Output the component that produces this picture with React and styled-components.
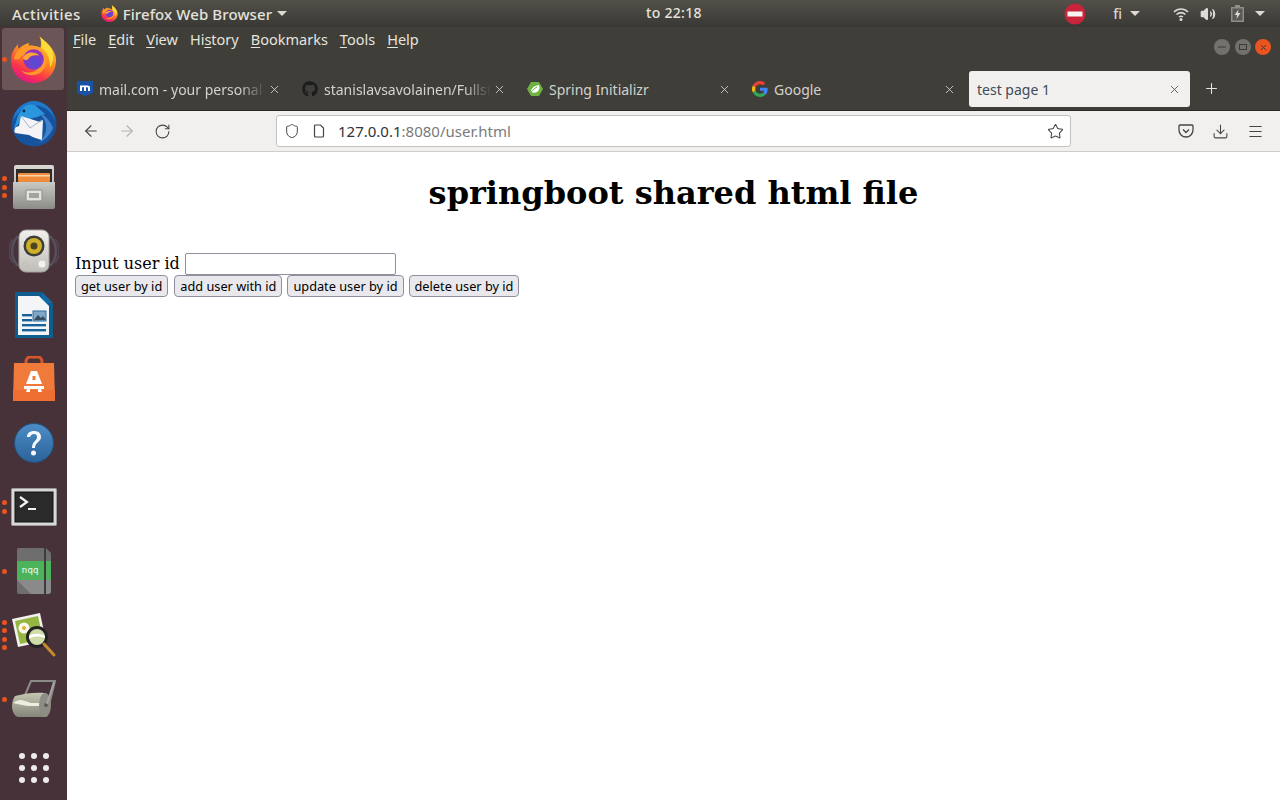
import React from 'react';
import styled, { createGlobalStyle } from 'styled-components';
import { FaGithub } from 'react-icons/fa';
import { ArrowLeft, ArrowRight, RotateCw, Star, Download, Menu, Plus, X, Shield, Volume2 } from 'lucide-react';

const UI_FONT = '"Noto Sans", "Open Sans", sans-serif';

const Global = createGlobalStyle`
  html, body { margin: 0; padding: 0; height: 100%; overflow: hidden; background: #fff; }
  #root { height: 100%; }
`;

const Screen = styled.div`
  width: 1280px;
  height: 800px;
  display: flex;
  flex-direction: column;
  font-family: ${UI_FONT};
`;

const TopBar = styled.header`
  position: relative;
  height: 27px;
  flex-shrink: 0;
  display: flex;
  align-items: center;
  padding: 0 15px 0 12px;
  color: #e4e2dc;
  font-size: 15px;
  font-weight: 500;
  background: linear-gradient(#53504a, #393834);
`;

const Activities = styled.span`
  letter-spacing: 0.4px;
`;

const AppName = styled.div`
  display: flex;
  align-items: center;
  margin-left: 20px;
  gap: 5px;
  letter-spacing: 0.1px;
`;

const Caret = styled.span`
  width: 0;
  height: 0;
  margin-left: ${p => p.$left || 0}px;
  border-left: 5px solid transparent;
  border-right: 5px solid transparent;
  border-top: 5px solid #dcdad4;
`;

const Clock = styled.div`
  position: absolute;
  left: 646px;
  top: 3px;
  font-size: 14px;
  letter-spacing: 0.3px;
`;

const Tray = styled.div`
  margin-left: auto;
  display: flex;
  align-items: center;
`;

const TrayIcon = styled.span`
  display: flex;
  margin-left: ${p => p.$left}px;
`;

const Lang = styled.span`
  margin-left: 27px;
  font-size: 14px;
  color: #d7d7d7;
`;

const Main = styled.div`
  flex: 1;
  display: flex;
  min-height: 0;
`;

const Dock = styled.nav`
  width: 67px;
  flex-shrink: 0;
  display: flex;
  flex-direction: column;
  background: #48323a;
`;

const DockItem = styled.div`
  position: relative;
  height: 64px;
  display: flex;
  align-items: center;
  justify-content: center;
  flex-shrink: 0;

  &.active::before {
    content: '';
    position: absolute;
    left: 2px;
    top: 1px;
    width: 62px;
    height: 62px;
    border-radius: 3px;
    background: #6b5557;
  }
  svg { position: relative; }
`;

const Dots = styled.div`
  position: absolute;
  left: 2px;
  top: 0;
  bottom: 0;
  display: flex;
  flex-direction: column;
  justify-content: center;
  gap: 3.5px;
`;

const Dot = styled.i`
  display: block;
  width: 5px;
  height: 5px;
  border-radius: 50%;
  background: #e9541f;
`;

const AppGrid = styled.div`
  margin: 0 auto;
  display: grid;
  grid-template-columns: repeat(3, 6px);
  gap: 6px;
  padding-top: 22px;

  i {
    width: 6px;
    height: 6px;
    border-radius: 50%;
    background: #eeecea;
  }
`;

const Browser = styled.section`
  flex: 1;
  min-width: 0;
  display: flex;
  flex-direction: column;
`;

const Chrome = styled.div`
  background: #3f3e39;
  border-bottom: 1px solid #2a2926;
  color: #e6e4df;
`;

const MenuRow = styled.div`
  height: 41px;
  box-sizing: border-box;
  display: flex;
  gap: 12px;
  padding: 3px 0 0 6px;
  font-size: 14.5px;

  u { text-underline-offset: 2px; }
`;

const MenuItem = styled.span`
  height: 20px;
  line-height: 19px;
`;

const WinButtons = styled.div`
  margin-left: auto;
  margin-right: 9px;
  display: flex;
  gap: 4.5px;
  padding-top: 9px;
`;

const WinButton = styled.span`
  width: 16px;
  height: 16px;
  border-radius: 50%;
  display: flex;
  align-items: center;
  justify-content: center;
  background: ${p => (p.$close ? '#e95420' : '#72716c')};
  color: #3b3a36;
`;

const TabRow = styled.div`
  height: 42px;
  box-sizing: border-box;
  display: flex;
  align-items: flex-start;
  gap: 4px;
  padding: 3px 0 0 2px;
`;

const Tab = styled.div`
  width: 221px;
  height: 36px;
  display: flex;
  align-items: center;
  padding: 0 8px;
  box-sizing: border-box;
  border-radius: 3px;
  font-size: 14px;
  background: ${p => (p.$active ? '#f2f0ef' : 'transparent')};
  color: ${p => (p.$active ? '#3f4b57' : '#d4d2cd')};
`;

const TabIcon = styled.span`
  width: 16px;
  height: 16px;
  flex-shrink: 0;
  margin-right: 6px;
  display: flex;
`;

const TabLabel = styled.span`
  flex: 1;
  min-width: 0;
  overflow: hidden;
  white-space: nowrap;
  ${p => p.$fade && 'mask-image: linear-gradient(to right, #000 84%, transparent 100%);'}
`;

const TabClose = styled.span`
  display: flex;
  width: 16px;
  justify-content: center;
  flex-shrink: 0;
  color: ${p => (p.$active ? '#4a4a4a' : '#dedcd7')};
`;

const NewTab = styled.span`
  display: flex;
  margin: 9px 0 0 9px;
  color: #e6e4df;
`;

const NavBar = styled.div`
  height: 41px;
  box-sizing: border-box;
  display: flex;
  align-items: center;
  background: #f2f0ef;
  border-bottom: 1px solid #cfcdca;
  color: #454545;
`;

const NavButtons = styled.div`
  width: 209px;
  flex-shrink: 0;
  display: flex;
  align-items: center;
  gap: 18px;
  padding-left: 15px;
  box-sizing: border-box;
`;

const UrlBox = styled.div`
  width: 795px;
  height: 32px;
  box-sizing: border-box;
  display: flex;
  align-items: center;
  gap: 13px;
  padding: 0 6px 0 7px;
  background: #fff;
  border: 1px solid #c4c2be;
  border-radius: 3px;
  font-size: 15px;
`;

const UrlText = styled.span`
  flex: 1;
  color: #7a7a7a;
  b { font-weight: 400; color: #333; }
`;

const NavRight = styled.div`
  margin-left: auto;
  display: flex;
  align-items: center;
  gap: 18px;
  padding-right: 16px;
`;

const Page = styled.main`
  flex: 1;
  padding: 0 8px;
  background: #fff;
  color: #000;
  font-family: "DejaVu Serif", serif;
  font-size: 16px;
`;

const Title = styled.h1`
  margin: 22.44px 0 0;
  font-size: 32px;
  text-align: center;
`;

const Line = styled.div`
  display: flex;
  align-items: center;
  height: 22px;
`;

const FirstLine = styled(Line)`
  margin-top: 41px;
  gap: 5px;

  span { margin-top: -2px; }
`;

const TextInput = styled.input`
  width: 211px;
  height: 22px;
  box-sizing: border-box;
  padding: 0 4px;
  background: #fff;
  border: 1px solid #8f8f9d;
  border-radius: 2px;
`;

const ActionButton = styled.button`
  height: 22px;
  box-sizing: border-box;
  padding: 0 5px;
  margin-right: 6px;
  font-family: ${UI_FONT};
  font-size: 12.75px;
  color: #000;
  background: #e9e9ed;
  border: 1px solid #8f8f9d;
  border-radius: 4px;

  &:nth-child(n + 2) { margin-right: 5px; }
`;

const FirefoxLogo = ({ size }) => (
  <svg width={size} height={size} viewBox="0 0 48 48">
    <defs>
      <linearGradient id="ffBody" x1="0.75" y1="0.1" x2="0.3" y2="1">
        <stop offset="0" stopColor="#ffd02e" />
        <stop offset="0.4" stopColor="#ff8a1e" />
        <stop offset="0.75" stopColor="#f9344c" />
        <stop offset="1" stopColor="#e31587" />
      </linearGradient>
      <radialGradient id="ffGlobe" cx="0.55" cy="0.65" r="0.7">
        <stop offset="0" stopColor="#4f4fd6" />
        <stop offset="1" stopColor="#a32bb8" />
      </radialGradient>
    </defs>
    <path d="M30 0c3 4 9 7 12 12 4 5 5 9 5 13 0 13-10 23-23 23S1 38 1 25c0-5 1-8 3-11 1-2 3-4 4-6 0 2 0 4 1 5 3-3 7-5 11-6-1 1-1 2-1 3 4-1 8 0 12 2 1-3 1-8-1-12z" fill="url(#ffBody)" />
    <path d="M31 1c4 4 10 8 12 14 2 6 1 12-2 17 0-8-2-15-9-20 1-3 1-7-1-11z" fill="#ffdb3a" />
    <path d="M4 24c1-8 8-14 17-14 8 0 14 5 16 13 1 6-2 12-7 15-6 3-14 3-19-3 4 3 10 3 14 1 5-2 7-7 5-12-2-4-6-6-10-6-5 0-9 2-11 6z" fill="#ff9a2a" />
    <circle cx="24" cy="24" r="10.5" fill="url(#ffGlobe)" />
    <path d="M13 23c1-4 6-7 11-6 2 0 5 1 6 3-5-1-9 0-11 3-1 2-4 2-6 0z" fill="#ffa436" />
  </svg>
);

const Thunderbird = () => (
  <svg width="48" height="48" viewBox="0 0 48 48">
    <circle cx="24" cy="25" r="22.5" fill="#17539d" />
    <path d="M3 22C4 10 14 2 24 2c10 0 20 8 21 20-2-7-7-12-13-14-5-2-11-2-16 1-6 3-10 7-13 13z" fill="#1f78c8" />
    <path d="M4 30l4-14 6-8c4-3 9-3 12-1l9 8-8 3-16 4-7 8z" fill="#2a97dc" />
    <path d="M30 14c6 3 11 9 13 15-3 7-8 12-14 15 6-6 9-14 6-22z" fill="#3f83cc" />
    <path d="M11 17l19 6 3-2-1 20c-3-1-8-2-13-5l-14-2c-1-2-1-4 1-6l3-1z" fill="#f4f4f6" />
    <path d="M11 17l9 12 12-8" fill="none" stroke="#a9b4c6" strokeWidth="1" />
    <circle cx="14" cy="12" r="1.4" fill="#102a4a" />
  </svg>
);

const FileCabinet = () => (
  <svg width="48" height="48" viewBox="0 0 48 48">
    <defs>
      <linearGradient id="cabBody" x1="0" y1="0" x2="0" y2="1">
        <stop offset="0" stopColor="#c9c9c6" />
        <stop offset="1" stopColor="#8b8b88" />
      </linearGradient>
      <linearGradient id="cabTop" x1="0" y1="0" x2="0" y2="1">
        <stop offset="0" stopColor="#d8d8d5" />
        <stop offset="1" stopColor="#9d9d9a" />
      </linearGradient>
    </defs>
    <rect x="4" y="2" width="40" height="43" rx="2" fill="url(#cabTop)" />
    <rect x="6" y="6" width="36" height="13" fill="#2d2a27" />
    <rect x="8" y="10" width="32" height="9" rx="1" fill="#ef8b3d" />
    <rect x="8" y="12" width="32" height="1.500" fill="#f9d6a8" />
    <path d="M3 19h42v25a2 2 0 0 1-2 2H5a2 2 0 0 1-2-2z" fill="url(#cabBody)" />
    <rect x="16" y="27" width="16" height="11" rx="1" fill="#e2e2df" stroke="#8a8a87" />
    <rect x="19" y="30" width="10" height="5" fill="#a3a3a0" />
  </svg>
);

const Speaker = () => (
  <svg width="50" height="50" viewBox="0 0 50 50">
    <defs>
      <linearGradient id="spkBody" x1="0" y1="0" x2="0" y2="1">
        <stop offset="0" stopColor="#f1f0ec" />
        <stop offset="1" stopColor="#bdbcb6" />
      </linearGradient>
    </defs>
    <path d="M9 10a22 22 0 0 0 0 30M41 10a22 22 0 0 1 0 30" fill="none" stroke="#6c7d92" strokeWidth="2.5" opacity="0.4" />
    <path d="M4 13a20 20 0 0 0 0 24M46 13a20 20 0 0 1 0 24" fill="none" stroke="#6c7d92" strokeWidth="2" opacity="0.25" />
    <rect x="10" y="4" width="30" height="42" rx="7" fill="url(#spkBody)" stroke="#a3a29d" />
    <circle cx="25" cy="20" r="10.5" fill="#3d3d3a" />
    <circle cx="25" cy="20" r="8" fill="#cfae2a" />
    <circle cx="25" cy="20" r="3.5" fill="#4d4520" />
    <circle cx="33" cy="38" r="4" fill="#f3f3f0" stroke="#cfcec8" />
    <circle cx="17" cy="38" r="2.5" fill="none" stroke="#c1c0ba" />
  </svg>
);

const WriterDoc = () => (
  <svg width="42" height="48" viewBox="0 0 42 48">
    <path d="M2 1h26l12 12v34H2z" fill="#0f5c8e" />
    <path d="M29 1l11 11H29z" fill="#0f6aa5" />
    <path d="M5 5h21l10 10v29H5z" fill="#f3f5f7" />
    <rect x="9" y="23" width="10" height="2.4" fill="#15639b" />
    <rect x="9" y="28" width="10" height="2.4" fill="#15639b" />
    <rect x="9" y="33" width="24" height="2.4" fill="#15639b" />
    <rect x="9" y="38" width="24" height="2.4" fill="#15639b" />
    <rect x="20" y="20" width="13" height="10" fill="#7ea7c8" stroke="#2f6f9e" />
    <path d="M21 29l4-5 3 3 2-2 3 4z" fill="#374d5e" />
  </svg>
);

const StoreBag = () => (
  <svg width="44" height="46" viewBox="0 0 44 46">
    <path d="M14 10V6c0-3 2-5 4-5h8c2 0 4 2 4 5v4" fill="none" stroke="#d9562a" strokeWidth="3" />
    <path d="M2 7h40l1 38H1z" fill="#f07a3a" />
    <path d="M1 34h42v11H1z" fill="#ee6f31" />
    <path d="M19 15h6l5 13h-16z" fill="#fff" />
    <rect x="20.500" y="20" width="3" height="4" fill="#f07a3a" />
    <rect x="12" y="28" width="20" height="2" fill="#f07a3a" />
    <path d="M12 30h20v3h-20zM15 33h3v3h-4zM26 33h3l1 3h-4z" fill="#fff" />
  </svg>
);

const HelpBall = () => (
  <svg width="40" height="40" viewBox="0 0 40 40">
    <defs>
      <linearGradient id="helpBg" x1="0" y1="0" x2="0" y2="1">
        <stop offset="0" stopColor="#4d8dc6" />
        <stop offset="1" stopColor="#2a6399" />
      </linearGradient>
    </defs>
    <circle cx="20" cy="20" r="19.5" fill="url(#helpBg)" stroke="#22527f" />
    <path d="M13 14c0-4 3-6 7-6s7 2 7 6c0 5-6 5-6 11h-3c0-7 5-7 5-11 0-2-1-3-3-3s-3 1-4 3z" fill="#f5f7fa" />
    <circle cx="19.5" cy="30" r="2.5" fill="#f5f7fa" />
  </svg>
);

const Terminal = () => (
  <svg width="46" height="38" viewBox="0 0 46 38">
    <rect x="0.5" y="0.5" width="45" height="37" rx="1" fill="#d8d8d6" stroke="#9b9b99" />
    <rect x="4" y="4" width="38" height="30" fill="#2a2a2a" stroke="#111" />
    <path d="M9 9l7 5-7 5" fill="none" stroke="#f2f2f2" strokeWidth="2.2" />
    <rect x="17" y="20" width="8" height="2" fill="#f2f2f2" />
  </svg>
);

const Notebook = () => (
  <svg width="34" height="46" viewBox="0 0 34 46">
    <path d="M0 2a2 2 0 0 1 2-2h27l5 5v38a3 3 0 0 1-3 3H2a2 2 0 0 1-2-2z" fill="#6e6e6e" />
    <path d="M0 32h34v11a3 3 0 0 1-3 3H14z" fill="#8a8a8a" />
    <rect x="0" y="13" width="34" height="19" fill="#4cb35a" />
    <text x="13" y="25" fontFamily="DejaVu Sans Mono, monospace" fontSize="9.5" fill="#f2f9f2" textAnchor="middle">nqq</text>
    <rect x="27" y="0" width="2" height="46" fill="#3c3c3c" />
  </svg>
);

const ImageViewer = () => (
  <svg width="46" height="46" viewBox="0 0 46 46">
    <path d="M1 7l28-6 6 28-28 6z" fill="#f1f1ee" />
    <path d="M4 9l23-5 5 23-23 5z" fill="#95b642" />
    <circle cx="13" cy="16" r="5.5" fill="#f9f8f0" />
    <circle cx="13" cy="16" r="2" fill="#e3b12a" />
    <circle cx="26" cy="25" r="9.5" fill="#cfdca8" stroke="#232323" strokeWidth="3" />
    <path d="M18 24c3-3 11-3 16 0v2c-5-2-12-2-16 1z" fill="#fff" />
    <path d="M33 32l10 11" stroke="#c58a2a" strokeWidth="3" strokeLinecap="round" />
  </svg>
);

const Roller = () => (
  <svg width="46" height="40" viewBox="0 0 46 40">
    <defs>
      <linearGradient id="rollBody" x1="0" y1="0" x2="0" y2="1">
        <stop offset="0" stopColor="#c5c6b2" />
        <stop offset="1" stopColor="#85867a" />
      </linearGradient>
    </defs>
    <path d="M14 16L20 2h24l-6 24" fill="none" stroke="#8b8b88" strokeWidth="2" />
    <path d="M4 17c10-3 22-4 30-3 3 0 5 5 5 12s-2 12-5 12H8c-4 0-7-5-7-11 0-4 1-7 3-10z" fill="url(#rollBody)" />
    <path d="M2 24c4-3 8-4 12-2l6 2h14v3H20c-6 0-12-2-18-3z" fill="#edeee0" />
    <ellipse cx="34" cy="26" rx="6" ry="12" fill="#8d8d85" />
    <circle cx="35" cy="26" r="2" fill="#5d5d58" />
    <path d="M36 25L43 3" stroke="#a5a5a1" strokeWidth="2" />
  </svg>
);

const MailIcon = () => (
  <svg width="16" height="16" viewBox="0 0 16 16">
    <path d="M0 0h16v12l-8 3-8-3z" fill="#1a52a8" />
    <path d="M3 10V4.500h7.500c1.500 0 2.500.8 2.500 2.200V10h-2V7c0-.5-.3-.8-.8-.8H9V10H7V6.200H5V10z" fill="#fff" />
  </svg>
);

const SpringIcon = () => (
  <svg width="16" height="16" viewBox="0 0 16 16">
    <path d="M4 1h8l4 7-4 7H4L0 8z" fill="#6db33f" />
    <path d="M12 4c1 3 0 6-2 7-2 1-4 1-6 0 0-3 2-6 8-7z" fill="#fff" />
    <path d="M4 11c2-2 4-4 6-5" stroke="#6db33f" fill="none" />
  </svg>
);

const GoogleIcon = () => (
  <svg width="16" height="16" viewBox="0 0 48 48">
    <path fill="#ea4335" d="M24 9.500c3.500 0 6.700 1.300 9.100 3.500l6.800-6.800C35.800 2.400 30.300 0 24 0 14.600 0 6.500 5.400 2.600 13.200l7.900 6.200C12.400 13.700 17.700 9.500 24 9.500z" />
    <path fill="#4285f4" d="M46.900 24.500c0-1.600-.2-3.100-.4-4.500H24v9h12.900c-.6 3-2.200 5.500-4.700 7.200l7.700 6c4.500-4.200 7-10.300 7-17.700z" />
    <path fill="#fbbc05" d="M10.500 28.600c-.5-1.400-.8-3-.8-4.600s.3-3.200.8-4.600l-7.900-6.200C.9 16.500 0 20.100 0 24s.9 7.500 2.600 10.800z" />
    <path fill="#34a853" d="M24 48c6.500 0 11.900-2.100 15.900-5.800l-7.700-6c-2.100 1.400-4.900 2.300-8.200 2.300-6.300 0-11.600-4.200-13.500-9.900l-7.900 6.100C6.500 42.600 14.600 48 24 48z" />
  </svg>
);

const NoEntry = () => (
  <svg width="22" height="22" viewBox="0 0 22 22">
    <circle cx="11" cy="11" r="10.5" fill="#c9243a" />
    <rect x="3.500" y="8.500" width="15" height="5" fill="#f6f3f3" />
  </svg>
);

const Wifi = () => (
  <svg width="16" height="14" viewBox="0 0 16 14">
    <path d="M1 5c4-4 10-4 14 0M3.500 7.500c3-2.500 6-2.500 9 0M6 10c1.300-1 2.700-1 4 0" fill="none" stroke="#dcdad4" strokeWidth="1.500" />
    <circle cx="8" cy="12.500" r="1.500" fill="#dcdad4" />
  </svg>
);

const Battery = () => (
  <svg width="13" height="17" viewBox="0 0 13 17">
    <path d="M4 0h5v2h4v15H0V2h4z" fill="#8f8d88" />
    <path d="M1.500 3.500h10v12h-10z" fill="#5a5853" />
    <path d="M7.500 4.500L3.500 10h2.500l-.5 4 4-6H7z" fill="#dcdad4" />
  </svg>
);

const Pocket = () => (
  <svg width="16" height="16" viewBox="0 0 16 16">
    <path d="M2 2h12a1 1 0 0 1 1 1v4a7 7 0 0 1-14 0V3a1 1 0 0 1 1-1z" fill="none" stroke="#454545" strokeWidth="1.300" />
    <path d="M5 6.500l3 3 3-3" fill="none" stroke="#454545" strokeWidth="1.300" />
  </svg>
);

const PageIcon = () => (
  <svg width="12" height="14" viewBox="0 0 12 14">
    <path d="M1.500 2a1 1 0 0 1 1-1h5l3 3v8a1 1 0 0 1-1 1h-7a1 1 0 0 1-1-1z" fill="none" stroke="#454545" strokeWidth="1.200" />
  </svg>
);

const dockApps = [
  { icon: <FirefoxLogo size={47} />, dots: 1, active: true },
  { icon: <Thunderbird />, dots: 0 },
  { icon: <FileCabinet />, dots: 3 },
  { icon: <Speaker />, dots: 0 },
  { icon: <WriterDoc />, dots: 0 },
  { icon: <StoreBag />, dots: 0 },
  { icon: <HelpBall />, dots: 0 },
  { icon: <Terminal />, dots: 2 },
  { icon: <Notebook />, dots: 1 },
  { icon: <ImageViewer />, dots: 4 },
  { icon: <Roller />, dots: 1 },
];

const tabs = [
  { label: 'mail.com - your personal', icon: <MailIcon />, fade: true },
  { label: 'stanislavsavolainen/Fullst', icon: <FaGithub size={16} color="#1c1c1c" />, fade: true },
  { label: 'Spring Initializr', icon: <SpringIcon /> },
  { label: 'Google', icon: <GoogleIcon /> },
  { label: 'test page 1', active: true },
];

const menus = [
  ['', 'F', 'ile'],
  ['', 'E', 'dit'],
  ['', 'V', 'iew'],
  ['Hi', 's', 'tory'],
  ['', 'B', 'ookmarks'],
  ['', 'T', 'ools'],
  ['', 'H', 'elp'],
];

const actions = ['get user by id', 'add user with id', 'update user by id', 'delete user by id'];

const App = () => {
  return (
    <Screen>
      <Global />
      <TopBar>
        <Activities>Activities</Activities>
        <AppName>
          <FirefoxLogo size={17} />
          <span>Firefox Web Browser</span>
          <Caret />
        </AppName>
        <Clock>to 22:18</Clock>
        <Tray>
          <NoEntry />
          <Lang>fi</Lang>
          <Caret $left={8} />
          <TrayIcon $left={33}><Wifi /></TrayIcon>
          <TrayIcon $left={11}><Volume2 size={16} color="#dcdad4" fill="#dcdad4" /></TrayIcon>
          <TrayIcon $left={15}><Battery /></TrayIcon>
          <Caret $left={11} />
        </Tray>
      </TopBar>
      <Main>
        <Dock>
          {dockApps.map((app, i) => (
            <DockItem key={i} className={app.active ? 'active' : ''}>
              {app.icon}
              {app.dots > 0 && (
                <Dots>
                  {Array.from({ length: app.dots }).map((_, d) => <Dot key={d} />)}
                </Dots>
              )}
            </DockItem>
          ))}
          <AppGrid>
            {Array.from({ length: 9 }).map((_, i) => <i key={i} />)}
          </AppGrid>
        </Dock>
        <Browser>
          <Chrome>
            <MenuRow>
              {menus.map(([before, key, after]) => (
                <MenuItem key={key + after}>{before}<u>{key}</u>{after}</MenuItem>
              ))}
              <WinButtons>
                <WinButton><svg width="8" height="8"><rect y="3.500" width="8" height="1" fill="#3b3a36" /></svg></WinButton>
                <WinButton><svg width="8" height="8"><rect x="0.500" y="1.500" width="7" height="5" fill="none" stroke="#3b3a36" /></svg></WinButton>
                <WinButton $close><X size={9} strokeWidth={2.5} /></WinButton>
              </WinButtons>
            </MenuRow>
            <TabRow>
              {tabs.map(tab => (
                <Tab key={tab.label} $active={tab.active}>
                  {tab.icon && <TabIcon>{tab.icon}</TabIcon>}
                  <TabLabel $fade={tab.fade}>{tab.label}</TabLabel>
                  <TabClose $active={tab.active}><X size={13} strokeWidth={1.500} /></TabClose>
                </Tab>
              ))}
              <NewTab><Plus size={17} strokeWidth={1.500} /></NewTab>
            </TabRow>
          </Chrome>
          <NavBar>
            <NavButtons>
              <ArrowLeft size={18} strokeWidth={1.500} />
              <ArrowRight size={18} strokeWidth={1.500} color="#b3b1ae" />
              <RotateCw size={17} strokeWidth={1.500} />
            </NavButtons>
            <UrlBox>
              <Shield size={16} strokeWidth={1.500} />
              <PageIcon />
              <UrlText><b>127.0.0.1</b>:8080/user.html</UrlText>
              <Star size={17} strokeWidth={1.500} />
            </UrlBox>
            <NavRight>
              <Pocket />
              <Download size={17} strokeWidth={1.500} />
              <Menu size={17} strokeWidth={1.500} />
            </NavRight>
          </NavBar>
          <Page>
            <Title>springboot shared html file</Title>
            <FirstLine>
              <span>Input user id</span>
              <TextInput />
            </FirstLine>
            <Line>
              {actions.map(a => <ActionButton key={a}>{a}</ActionButton>)}
            </Line>
          </Page>
        </Browser>
      </Main>
    </Screen>
  );
};

export default App;
